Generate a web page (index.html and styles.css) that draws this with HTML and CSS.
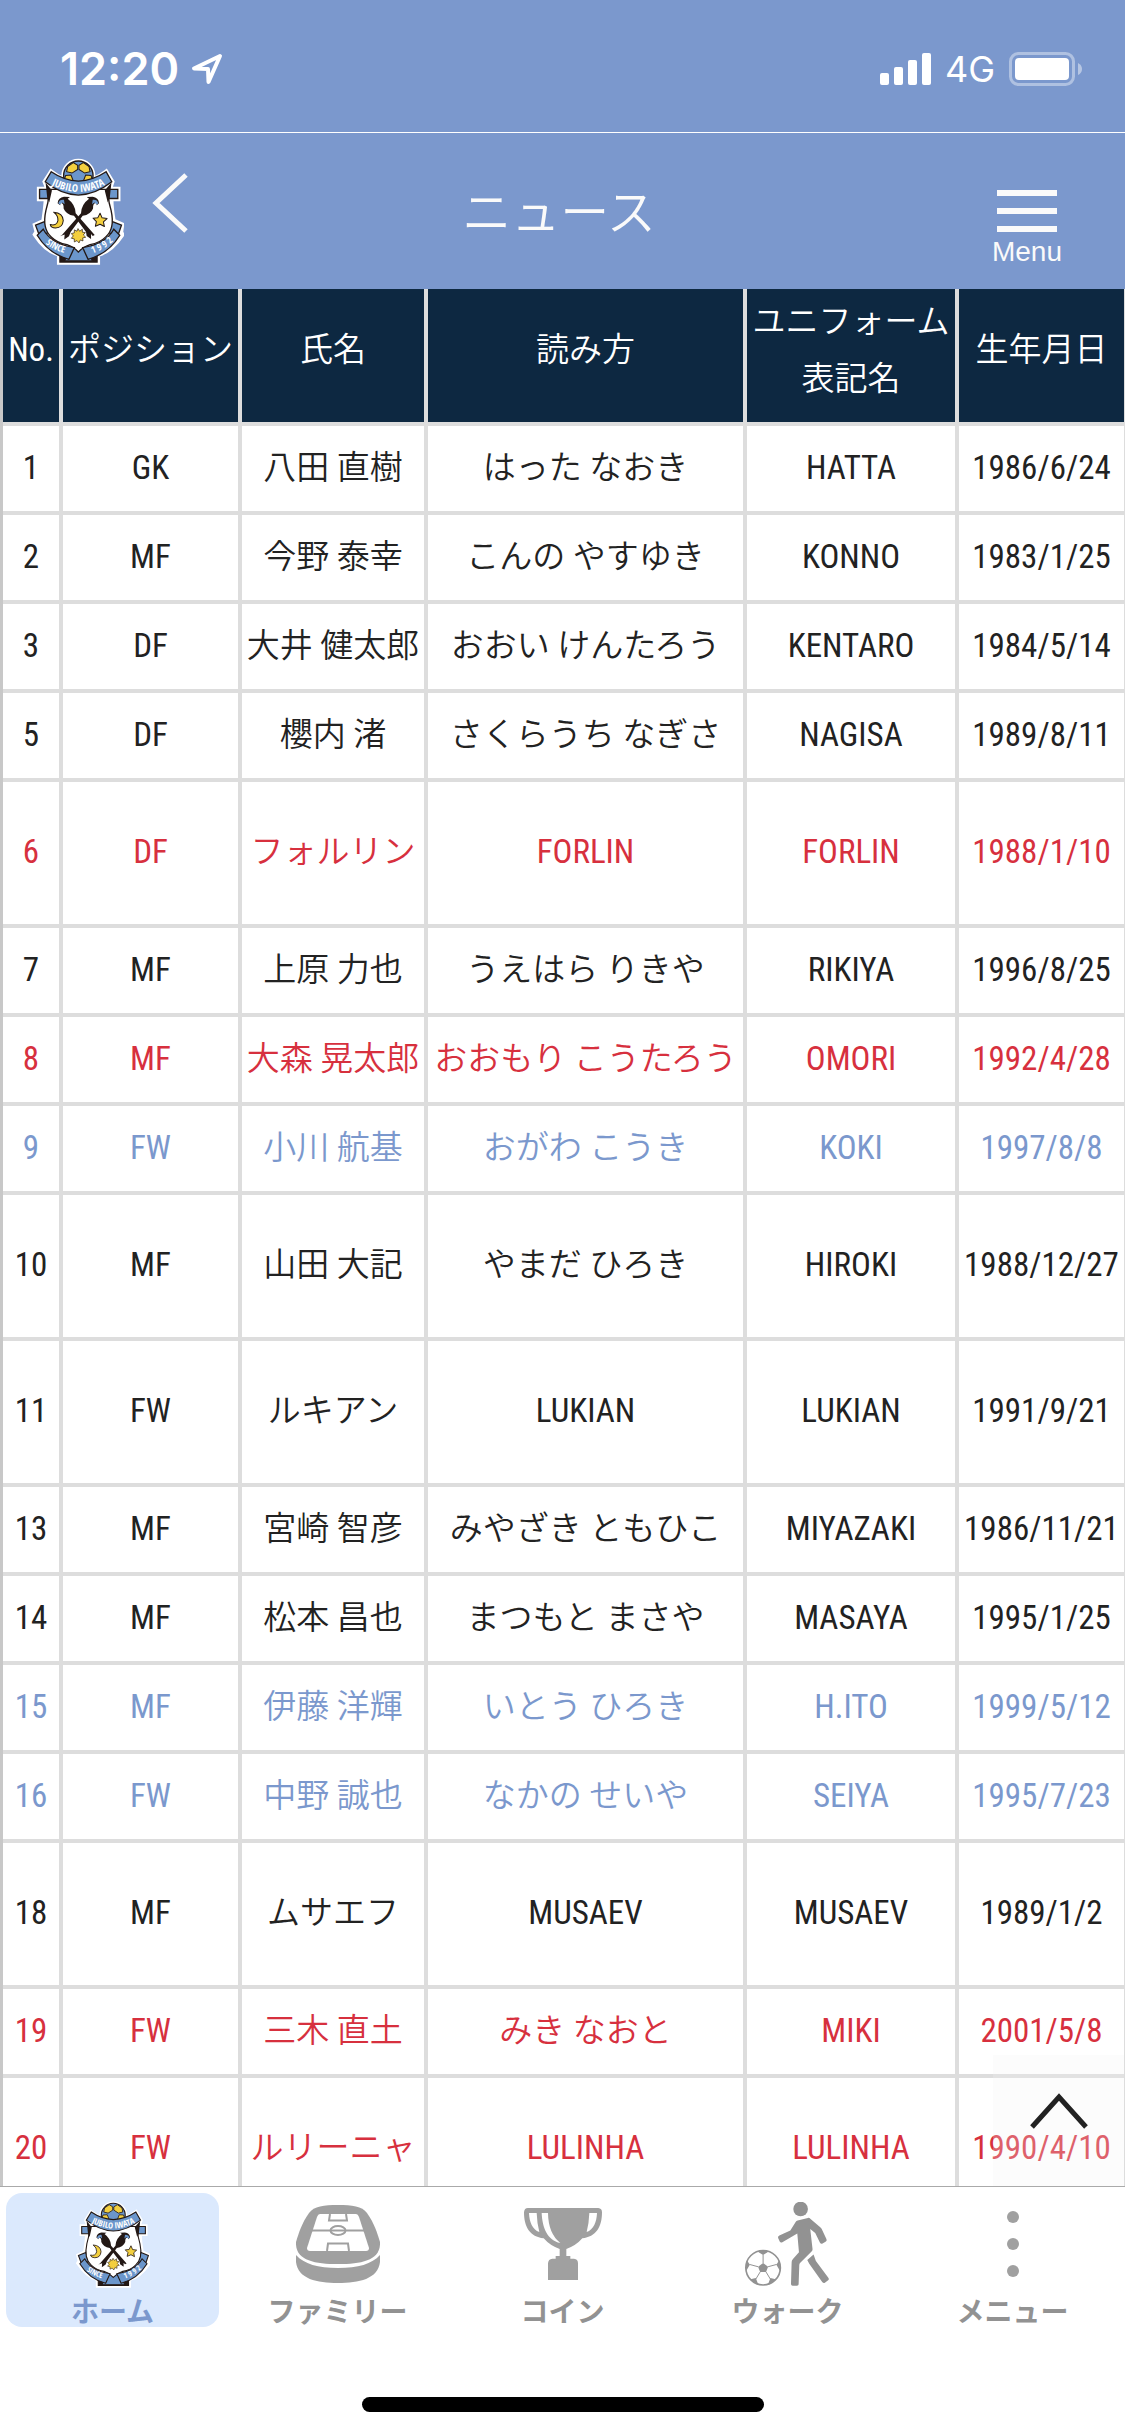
FILE: index.html
```html
<!DOCTYPE html>
<html lang="ja">

<head>
	<meta charset="UTF-8" />
	<meta name="viewport" content="width=device-width, initial-scale=1.0" />
	<title>ニュース</title>
	<link rel="stylesheet" href="styles.css">
</head>

<body>
	<div class="status">
		<div class="status-left">
			<span class="time">12:20</span>
			<svg width="32" height="32" viewBox="0 0 32 32" fill="none" stroke="#fff" stroke-width="4" stroke-linejoin="round">
				<path d="M29 3L3 15.500L17 16L17.500 29Z" />
			</svg>
		</div>
		<div class="status-right">
			<svg width="51" height="32" viewBox="0 0 51 32" fill="#fff">
				<rect x="0" y="20" width="9" height="12" rx="2" />
				<rect x="14" y="14" width="9" height="18" rx="2" />
				<rect x="28" y="7" width="9" height="25" rx="2" />
				<rect x="42" y="0" width="9" height="32" rx="2" />
			</svg>
			<span class="network">4G</span>
			<svg width="74" height="34" viewBox="0 0 74 34">
				<rect x="1.500" y="1.500" width="63" height="31" rx="8" fill="none" stroke="#fff" stroke-opacity=".4" stroke-width="3" />
				<rect x="6" y="6" width="54" height="22" rx="4" fill="#fff" />
				<path d="M69 11Q73 13 73 17Q73 21 69 23Z" fill="#fff" fill-opacity=".45" />
			</svg>
		</div>
	</div>

	<header class="header">
		<div class="header-left">
			<a class="logo" href="#" aria-label="ホーム">
				<svg width="92" height="108" viewBox="36 36 272 323">
					<!-- the tab bar reuses this crest -->
					<g id="crest">
						<g fill="#fff" stroke="#fff" stroke-width="16">
							<circle cx="173" cy="92" r="43" />
							<path d="M92 82Q130 112 173 114Q217 112 256 82L273 110L268 125V133H291V160H270Q270 190 277 228L302 239L299 262L303 268Q270 318 230 327V350H117V327Q75 315 45 268L50 260L45 240L70 229Q76 190 78 160H57V133H80V125L74 110Z" />
						</g>
						<g stroke="#231815" stroke-width="4">
							<circle cx="173" cy="92" r="44" fill="#6b96cb" />
							<g fill="#f3cf3f" stroke-width="3">
								<path d="M141 65L158 53L171 61V73L154 84L138 80Z" />
								<path d="M205 65L188 53L175 61V73L192 84L208 80Z" />
								<path d="M135 91L151 90L158 108L152 125L131 105Z" />
								<path d="M211 91L195 90L188 108L194 125L215 105Z" />
							</g>
							<path d="M57 133H84V160H57ZM291 133H263V160H291Z" fill="#6b96cb" />
							<path d="M118 350V320H229V350Z" fill="#231815" />
							<path d="M155 306H192L216 347H131Z" fill="#6b96cb" />
							<path d="M45 240L72 229L84 262L57 272ZM302 240L275 229L262 262L291 272Z" fill="#6b96cb" />
							<path d="M84 133V150Q84 172 76 196Q64 250 92 275Q110 293 139 298Q161 306 173 320Q186 306 208 298Q238 293 255 275Q283 250 271 196Q263 172 263 150V133Z" fill="#fff" />
							<path d="M75 112L94 136L86 172L80 158ZM272 112L252 136L261 172L267 158Z" fill="#231815" stroke="none" />
							<path d="M92 80Q130 106 173 108Q217 106 256 80L273 110Q225 148 173 150Q121 148 74 110Z" fill="#6b96cb" />
							<path d="M68 252Q92 296 161 307L145 342Q83 325 50 270ZM279 252Q255 296 186 307L202 342Q264 325 297 270Z" fill="#6b96cb" />
						</g>
						<!-- crossed birds -->
						<g fill="#231815">
							<path d="M111 174Q113 157 130 155L148 156L141 161Q164 178 165 204L222 269L216 272L211 266L211 281L198 272L196 260L160 212Q136 208 129 190Q130 174 119 173L119 180Z" />
							<path d="M235 174Q233 157 216 155L198 156L205 161Q182 178 181 204L124 269L118 273L132 268L131 283L145 273L150 260L186 212Q210 208 217 190Q216 174 227 173L228 180Z" />
						</g>
						<path d="M113 174Q117 162 130 164L132 177L125 172L118 178ZM233 174Q229 162 216 164L214 177L221 172L228 178Z" fill="#6b96cb" />
						<!-- moon, star, sun -->
						<g fill="#f3cf3f" stroke="#231815" stroke-width="3" stroke-linejoin="round">
							<path d="M99 201Q127 203 128 226Q126 248 105 248Q91 248 89 238Q108 243 112 226Q113 211 99 201Z" />
							<path d="M238 204L244 218L259 220L248 230L251 244L238 237L224 243L227 229L217 219L231 218Z" />
							<path d="M172 250L177 258L185 252L185 261L194 262L188 269L195 276L186 278L187 287L179 284L175 293L169 286L161 290L161 281L152 279L158 272L152 265L161 263L161 254L169 258Z" stroke-width="2" />
						</g>
						<path id="ribbonTop" d="M78 112Q125 139 173 141Q221 139 268 112" fill="none" />
						<path id="ribbonLeft" d="M60 282Q94 317 150 328" fill="none" />
						<path id="ribbonRight" d="M198 330Q254 316 290 275" fill="none" />
						<g class="crest-text">
							<text class="crest-name"><textPath href="#ribbonTop" startOffset="50%" text-anchor="middle">JUBILO IWATA</textPath></text>
							<text><textPath href="#ribbonLeft" startOffset="50%" text-anchor="middle">SINCE</textPath></text>
							<text><textPath href="#ribbonRight" startOffset="50%" text-anchor="middle">1 9 9 2</textPath></text>
						</g>
					</g>
				</svg>
			</a>
			<button class="back" type="button" aria-label="戻る">
				<svg width="37" height="60" viewBox="0 0 37 60" fill="none" stroke="#fafafa" stroke-width="5">
					<path d="M34 2L4 30L34 58" />
				</svg>
			</button>
		</div>
		<h1 class="title">ニュース</h1>
		<button class="menu" type="button">
			<span class="bar"></span>
			<span class="bar"></span>
			<span class="bar"></span>
			<span class="menu-text">Menu</span>
		</button>
	</header>

	<main class="main">
		<table class="players">
			<colgroup>
				<col class="col-no">
				<col class="col-pos">
				<col class="col-name">
				<col class="col-kana">
				<col class="col-uni">
				<col class="col-birth">
			</colgroup>
			<thead>
				<tr><th>No.</th><th>ポジション</th><th>氏名</th><th>読み方</th><th>ユニフォーム<br>表記名</th><th>生年月日</th></tr>
			</thead>
			<tbody>
				<tr><td>1</td><td>GK</td><td>八田 直樹</td><td>はった なおき</td><td>HATTA</td><td>1986/6/24</td></tr>
				<tr><td>2</td><td>MF</td><td>今野 泰幸</td><td>こんの やすゆき</td><td>KONNO</td><td>1983/1/25</td></tr>
				<tr><td>3</td><td>DF</td><td>大井 健太郎</td><td>おおい けんたろう</td><td>KENTARO</td><td>1984/5/14</td></tr>
				<tr><td>5</td><td>DF</td><td>櫻内 渚</td><td>さくらうち なぎさ</td><td>NAGISA</td><td>1989/8/11</td></tr>
				<tr class="tall red"><td>6</td><td>DF</td><td>フォルリン</td><td>FORLIN</td><td>FORLIN</td><td>1988/1/10</td></tr>
				<tr><td>7</td><td>MF</td><td>上原 力也</td><td>うえはら りきや</td><td>RIKIYA</td><td>1996/8/25</td></tr>
				<tr class="red"><td>8</td><td>MF</td><td>大森 晃太郎</td><td>おおもり こうたろう</td><td>OMORI</td><td>1992/4/28</td></tr>
				<tr class="blue"><td>9</td><td>FW</td><td>小川 航基</td><td>おがわ こうき</td><td>KOKI</td><td>1997/8/8</td></tr>
				<tr class="tall"><td>10</td><td>MF</td><td>山田 大記</td><td>やまだ ひろき</td><td>HIROKI</td><td>1988/12/27</td></tr>
				<tr class="tall"><td>11</td><td>FW</td><td>ルキアン</td><td>LUKIAN</td><td>LUKIAN</td><td>1991/9/21</td></tr>
				<tr><td>13</td><td>MF</td><td>宮崎 智彦</td><td>みやざき ともひこ</td><td>MIYAZAKI</td><td>1986/11/21</td></tr>
				<tr><td>14</td><td>MF</td><td>松本 昌也</td><td>まつもと まさや</td><td>MASAYA</td><td>1995/1/25</td></tr>
				<tr class="blue"><td>15</td><td>MF</td><td>伊藤 洋輝</td><td>いとう ひろき</td><td>H.ITO</td><td>1999/5/12</td></tr>
				<tr class="blue"><td>16</td><td>FW</td><td>中野 誠也</td><td>なかの せいや</td><td>SEIYA</td><td>1995/7/23</td></tr>
				<tr class="tall"><td>18</td><td>MF</td><td>ムサエフ</td><td>MUSAEV</td><td>MUSAEV</td><td>1989/1/2</td></tr>
				<tr class="red"><td>19</td><td>FW</td><td>三木 直土</td><td>みき なおと</td><td>MIKI</td><td>2001/5/8</td></tr>
				<tr class="tall red"><td>20</td><td>FW</td><td>ルリーニャ</td><td>LULINHA</td><td>LULINHA</td><td>1990/4/10</td></tr>
			</tbody>
		</table>
		<button class="to-top" type="button" aria-label="トップへ戻る">
			<svg width="60" height="38" viewBox="0 0 60 38" fill="none" stroke="#222" stroke-width="5">
				<path d="M3 35L30 5L57 35" />
			</svg>
		</button>
	</main>

	<footer class="footer">
		<nav class="tabs">
			<a class="tab active" href="#">
				<span class="icon"><svg width="74" height="88" viewBox="36 36 272 323"><use href="#crest" /></svg></span>
				<span>ホーム</span>
			</a>
			<a class="tab" href="#">
				<span class="icon">
					<svg width="84" height="78" viewBox="0 0 84 78" fill="#a0a0a0">
						<path d="M42 0C56 0 66 1 71 8C78 18 81 27 84 37C85 55 66 59 42 59C18 59 -1 55 0 37C3 27 6 18 13 8C18 1 28 0 42 0Z" />
						<path d="M0 50C8 59 22 63 42 63C62 63 76 59 84 50V57C82 74 63 78 42 78C21 78 2 74 0 57Z" />
						<path d="M24 9H60Q62 9 63 12L73 43Q73 46 70 46H14Q11 46 11 43L21 12Q22 9 24 9Z" fill="#fff" />
						<g fill="none" stroke="#a0a0a0" stroke-width="2">
							<path d="M15 25.500H35M49 25.500H69M34 9L33 15.500H51L50 9M31 46L32 38.500H52L53 46" />
							<ellipse cx="42" cy="25.500" rx="7.500" ry="4.500" />
							<path d="M35 25.500H49" />
						</g>
					</svg>
				</span>
				<span>ファミリー</span>
			</a>
			<a class="tab" href="#">
				<span class="icon">
					<svg width="78" height="72" viewBox="69 63 234 216">
						<path d="M81 63H292Q303 64 303 76C303 120 285 150 244 154Q225 176 196 186V207H208V215H219Q231 216 231 229V279H141V229Q142 216 154 215H164V207H176V186Q147 176 128 154C87 150 69 120 69 76Q70 63 81 63Z" fill="#a0a0a0" />
						<path d="M84 78H107Q108 108 115 135C94 128 85 105 84 78ZM122 78H141Q142 140 178 168C139 160 124 122 122 78ZM265 78H288C287 105 278 128 257 135Q264 108 265 78Z" fill="#fff" />
					</svg>
				</span>
				<span>コイン</span>
			</a>
			<a class="tab" href="#">
				<span class="icon">
					<svg width="85" height="84" viewBox="735 36 255 253" fill="#929292">
						<circle cx="902" cy="57" r="22" />
						<path d="M893 92L924 84Q928 83 932 87L962 113Q965 116 967 120L980 148Q982 153 977 156L968 161Q963 163 960 158L946 129L931 117L938 178Q938 182 935 185L901 219Q898 222 898 226L896 284Q896 288 891 288H878Q873 288 873 283L875 217Q875 212 879 208L897 187L892 131L847 157Q842 160 839 155L834 144Q833 139 838 137L871 122L887 96Q889 93 893 92Z" />
						<path d="M941 194L948 214L986 265Q989 269 985 272L975 279Q971 281 967 277L928 222L922 211Z" />
						<circle cx="789" cy="234" r="52" fill="#fff" stroke="#929292" stroke-width="5" />
						<path d="M789 220L804 231L798 247H780L774 231Z" />
						<path d="M789 220V195M804 231L830 224M798 247L812 270M780 247L766 270M774 231L748 224" fill="none" stroke="#929292" stroke-width="3" />
						<path d="M772 185Q789 178 806 185L789 196ZM837 212Q844 228 840 244L829 225ZM827 269Q818 282 803 286L811 265ZM751 269Q760 282 775 286L767 265ZM741 212Q734 228 738 244L749 225Z" />
					</svg>
				</span>
				<span>ウォーク</span>
			</a>
			<a class="tab" href="#">
				<span class="icon">
					<svg width="12" height="66" viewBox="0 0 12 66" fill="#a0a0a0">
						<circle cx="6" cy="6" r="6" />
						<circle cx="6" cy="33" r="6" />
						<circle cx="6" cy="60" r="6" />
					</svg>
				</span>
				<span>メニュー</span>
			</a>
		</nav>
		<div class="home-bar"></div>
	</footer>
</body>

</html>
```
FILE: styles.css
```css
* {
	padding: 0;
	margin: 0;
	box-sizing: border-box;
}

body {
	display: flex;
	flex-direction: column;
	height: 100vh;
	overflow: hidden;
	background-color: #fff;
	color: #222;
	font-family: "Roboto Condensed", "Noto Sans CJK JP DemiLight", "Noto Sans CJK JP", sans-serif;
	font-size: 33px;
}

button {
	border: none;
	background: none;
	font: inherit;
	color: inherit;
}

a {
	color: inherit;
	text-decoration: none;
}

svg {
	display: block;
}

.crest-text {
	fill: #fff;
	font-family: "Open Sans Condensed", "Roboto Condensed", sans-serif;
	font-size: 28px;
	font-weight: 700;
}

.crest-name {
	font-size: 31px;
}

/* status bar */
.status {
	display: flex;
	justify-content: space-between;
	align-items: center;
	flex: none;
	height: 133px;
	padding: 5px 42px 0 60px;
	background-color: #7b98cd;
	border-bottom: 1px solid #fff;
	color: #fff;
	font-family: Inter, sans-serif;
}

.status-left,
.status-right {
	display: flex;
	align-items: center;
	gap: 12px;
}

.status-right {
	gap: 14px;
}

.time {
	font-size: 45px;
	font-weight: 600;
}

.network {
	font-size: 36px;
}

/* header */
.header {
	display: grid;
	grid-template-columns: 1fr auto 1fr;
	align-items: center;
	flex: none;
	height: 156px;
	padding: 0 63px 0 32px;
	background-color: #7b98cd;
	color: #fafafa;
}

.header-left {
	display: flex;
	align-items: center;
	gap: 28px;
}

.back {
	padding-bottom: 16px;
}

.title {
	font-size: 49px;
	font-weight: 400;
	padding: 0 0 6px 24px;
}

.menu {
	justify-self: end;
	display: flex;
	flex-direction: column;
	align-items: center;
	gap: 12px;
	padding-top: 34px;
}

.bar {
	width: 60px;
	height: 6px;
	background-color: #fafafa;
}

.menu-text {
	font-family: "Liberation Sans", sans-serif;
	font-size: 28px;
	line-height: 28px;
	margin-top: -6px;
}

/* player table */
.main {
	position: relative;
	flex: 1;
	min-height: 0;
	overflow: hidden;
}

.players {
	width: 100%;
	table-layout: fixed;
	border-collapse: separate;
	border-spacing: 0;
	border-left: 3px solid #c8c8c8;
	text-align: center;
	line-height: 57px;
	white-space: nowrap;
}

.col-no {
	width: 60px;
}

.col-pos {
	width: 179px;
}

.col-name {
	width: 186px;
}

.col-kana {
	width: 319px;
}

.col-uni {
	width: 212px;
}

.players th,
.players td {
	height: 89px;
	padding-bottom: 3px;
	border-right: 4px solid #ddd;
	border-bottom: 4px solid #ddd;
	font-weight: 400;
	vertical-align: middle;
}

.players th:last-child,
.players td:last-child {
	border-right-width: 1px;
}

.players th {
	height: 137px;
	padding-bottom: 12px;
	background-color: #0d2841;
	color: #fff;
}

.players .tall td {
	height: 146px;
}

.red {
	color: #d7303e;
}

.blue {
	color: #7b98cd;
}

.to-top {
	position: absolute;
	right: 1px;
	bottom: 0;
	display: flex;
	justify-content: center;
	width: 131px;
	height: 131px;
	padding-top: 37px;
	background-color: rgba(243, 243, 243, .25);
}

/* bottom tabs */
.footer {
	flex: none;
	padding: 6px 0 24px;
	border-top: 1px solid #aaa;
	background-color: #fff;
}

.tabs {
	display: grid;
	grid-template-columns: repeat(5, 1fr);
}

.tab {
	display: flex;
	flex-direction: column;
	align-items: center;
	height: 134px;
	margin: 0 6px;
	border-radius: 16px;
	color: #929292;
	font-family: "Noto Sans CJK JP", sans-serif;
	font-size: 28px;
	font-weight: 700;
	line-height: 30px;
}

.tab.active {
	background-color: #dbe9fd;
	color: #7b98cd;
}

.icon {
	display: flex;
	align-items: center;
	height: 102px;
}

.home-bar {
	width: 402px;
	height: 15px;
	margin: 70px auto 0;
	border-radius: 8px;
	background-color: #000;
}
```
